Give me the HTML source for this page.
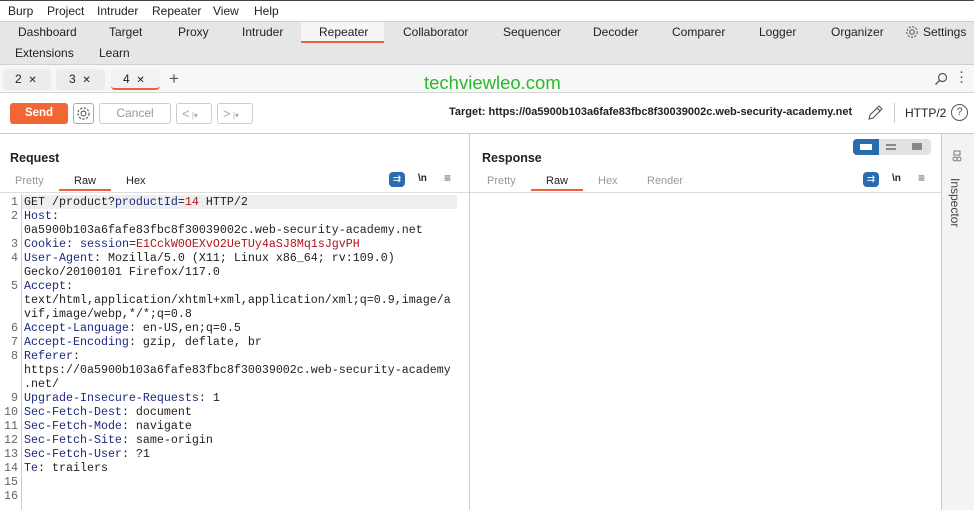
<!DOCTYPE html>
<html><head><style>
*{margin:0;padding:0;box-sizing:border-box}
body{width:974px;height:510px;overflow:hidden;background:#fff;font-family:"Liberation Sans",sans-serif;font-size:12px;color:#222;position:relative}
.a{position:absolute;white-space:nowrap}
.mono{font-family:"Liberation Mono","DejaVu Sans Mono",monospace;font-size:11.67px}
.k{color:#1c2a80}.v{color:#b0151a}
.ln{color:#666;text-align:right;width:18px;left:0}
</style></head><body>
<div class="a" style="left:0;top:0;width:974px;height:1px;background:#444"></div>
<div class="a" style="left:8px;top:4px">Burp</div>
<div class="a" style="left:47px;top:4px">Project</div>
<div class="a" style="left:97px;top:4px">Intruder</div>
<div class="a" style="left:152px;top:4px">Repeater</div>
<div class="a" style="left:213px;top:4px">View</div>
<div class="a" style="left:254px;top:4px">Help</div>
<div class="a" style="left:0;top:21px;width:974px;height:44px;background:#e6e6e6;border-top:1px solid #d0d0d0;border-bottom:1px solid #cfcfcf"></div>
<div class="a" style="left:301px;top:22px;width:83px;height:21px;background:#f5f5f5;border-bottom:2px solid #e8623a"></div>
<div class="a" style="left:18px;top:25px">Dashboard</div>
<div class="a" style="left:109px;top:25px">Target</div>
<div class="a" style="left:178px;top:25px">Proxy</div>
<div class="a" style="left:242px;top:25px">Intruder</div>
<div class="a" style="left:319px;top:25px">Repeater</div>
<div class="a" style="left:403px;top:25px">Collaborator</div>
<div class="a" style="left:503px;top:25px">Sequencer</div>
<div class="a" style="left:593px;top:25px">Decoder</div>
<div class="a" style="left:672px;top:25px">Comparer</div>
<div class="a" style="left:759px;top:25px">Logger</div>
<div class="a" style="left:831px;top:25px">Organizer</div>
<svg class="a" style="left:905px;top:25px" width="14" height="14" viewBox="0 0 14 14"><circle cx="7" cy="7" r="2.3" fill="none" stroke="#555"/><circle cx="7" cy="7" r="5.2" fill="none" stroke="#555" stroke-dasharray="2.2 1.3"/></svg>
<div class="a" style="left:923px;top:25px">Settings</div>
<div class="a" style="left:15px;top:46px">Extensions</div>
<div class="a" style="left:99px;top:46px">Learn</div>
<div class="a" style="left:0;top:65px;width:974px;height:28px;background:#f7f7f7;border-bottom:1px solid #d6d6d6"></div>
<div class="a" style="left:3px;top:69px;width:48px;height:21px;background:#ececec;border-radius:4px"></div>
<div class="a" style="left:56px;top:69px;width:49px;height:21px;background:#ececec;border-radius:4px"></div>
<div class="a" style="left:111px;top:69px;width:49px;height:21px;background:#f2f2f2;border-radius:4px;border-bottom:2px solid #e8623a"></div>
<div class="a" style="left:15px;top:72px">2 &nbsp;<span style="font-size:10px">✕</span></div>
<div class="a" style="left:69px;top:72px">3 &nbsp;<span style="font-size:10px">✕</span></div>
<div class="a" style="left:123px;top:72px">4 &nbsp;<span style="font-size:10px">✕</span></div>
<div class="a" style="left:169px;top:69px;font-size:17px;color:#555">+</div>
<div class="a" style="left:424px;top:72px;font-size:18.5px;color:#2eb82e">techviewleo.com</div>
<svg class="a" style="left:934px;top:72px" width="14" height="14"><circle cx="8.5" cy="5.5" r="4" fill="none" stroke="#555" stroke-width="1.2"/><line x1="5.5" y1="8.5" x2="1.5" y2="12.5" stroke="#555" stroke-width="1.3"/></svg>
<div class="a" style="left:960px;top:71px;color:#555;font-weight:bold;line-height:5px;font-size:11px">·<br>·<br>·</div>
<div class="a" style="left:10px;top:103px;width:58px;height:21px;background:#f26634;border-radius:3px;color:#fff;text-align:center;line-height:21px;font-weight:bold;font-size:11.5px">Send</div>
<div class="a" style="left:73px;top:103px;width:21px;height:21px;border:1px solid #aaa;border-radius:3px"></div>
<svg class="a" style="left:76px;top:106px" width="15" height="15" viewBox="0 0 14 14"><circle cx="7" cy="7" r="2.3" fill="none" stroke="#555"/><circle cx="7" cy="7" r="5.2" fill="none" stroke="#555" stroke-dasharray="2.2 1.3"/></svg>
<div class="a" style="left:99px;top:103px;width:72px;height:21px;border:1px solid #ccc;border-radius:3px;color:#999;text-align:center;line-height:19px">Cancel</div>
<div class="a" style="left:176px;top:103px;width:36px;height:21px;border:1px solid #ccc;border-radius:3px;color:#aaa;line-height:19px;padding-left:5px;font-size:13px">&lt;<span style="font-size:8px"> |▾</span></div>
<div class="a" style="left:217px;top:103px;width:36px;height:21px;border:1px solid #ccc;border-radius:3px;color:#aaa;line-height:19px;padding-left:5px;font-size:13px">&gt;<span style="font-size:8px"> |▾</span></div>
<div class="a" style="left:449px;top:106px;font-size:11px;font-weight:bold;letter-spacing:0">Target: https://0a5900b103a6fafe83fbc8f30039002c.web-security-academy.net</div>
<svg class="a" style="left:866px;top:104px" width="18" height="18"><path d="M3 15 L4 11 L13 2 L16 5 L7 14 Z M11 4 L14 7" fill="none" stroke="#555" stroke-width="1.1"/></svg>
<div class="a" style="left:894px;top:103px;width:1px;height:20px;background:#ccc"></div>
<div class="a" style="left:905px;top:106px">HTTP/2</div>
<div class="a" style="left:951px;top:104px;width:17px;height:17px;border:1.3px solid #555;border-radius:50%;text-align:center;line-height:15px;font-size:11px;color:#555">?</div>
<div class="a" style="left:0;top:133px;width:974px;height:1px;background:#ccc"></div>
<div class="a" style="left:469px;top:133px;width:1px;height:377px;background:#ccc"></div>
<div class="a" style="left:941px;top:133px;width:1px;height:377px;background:#ccc"></div>
<div class="a" style="left:942px;top:134px;width:32px;height:376px;background:#f3f3f3"></div>
<svg class="a" style="left:952px;top:150px" width="10" height="12"><rect x="2" y="1" width="6" height="4" fill="none" stroke="#777"/><circle cx="3" cy="9" r="2" fill="none" stroke="#777"/><circle cx="7" cy="9" r="2" fill="none" stroke="#777"/></svg>
<div class="a" style="left:962px;top:178px;transform:rotate(90deg);transform-origin:0 0;font-size:12px;color:#444">Inspector</div>
<div class="a" style="left:853px;top:139px;width:78px;height:16px;background:#e2e2e2;border-radius:4px"></div>
<div class="a" style="left:853px;top:139px;width:26px;height:16px;background:#2a6bb0;border-radius:4px 0 0 4px"></div>
<div class="a" style="left:860px;top:144px;width:12px;height:6px;border:1px solid #fff;border-left-width:5px;border-right-width:5px;background:#fff"></div>
<div class="a" style="left:886px;top:144px;width:10px;height:6px;border-top:2px solid #888;border-bottom:2px solid #888"></div>
<div class="a" style="left:912px;top:143px;width:10px;height:7px;background:#888"></div>
<div class="a" style="left:10px;top:151px;font-weight:bold;font-size:12.5px">Request</div>
<div class="a" style="left:15px;top:175px;color:#999;font-size:11px">Pretty</div>
<div class="a" style="left:74px;top:175px;font-size:11px">Raw</div>
<div class="a" style="left:59px;top:189px;width:52px;height:2px;background:#e8623a"></div>
<div class="a" style="left:126px;top:175px;font-size:11px">Hex</div>
<div class="a" style="left:0;top:192px;width:469px;height:1px;background:#ddd"></div>
<div class="a" style="left:389px;top:172px;width:16px;height:15px;background:#2a6bb0;border-radius:4px;color:#fff;font-size:10px;text-align:center;line-height:15px">⇉</div>
<div class="a" style="left:418px;top:173px;font-size:10px;font-weight:bold">\n</div>
<div class="a" style="left:444px;top:171px;font-size:12px;color:#555">≡</div>
<div class="a" style="left:482px;top:151px;font-weight:bold;font-size:12.5px">Response</div>
<div class="a" style="left:487px;top:175px;color:#999;font-size:11px">Pretty</div>
<div class="a" style="left:546px;top:175px;font-size:11px">Raw</div>
<div class="a" style="left:531px;top:189px;width:52px;height:2px;background:#e8623a"></div>
<div class="a" style="left:598px;top:175px;color:#999;font-size:11px">Hex</div>
<div class="a" style="left:647px;top:175px;color:#999;font-size:11px">Render</div>
<div class="a" style="left:470px;top:192px;width:471px;height:1px;background:#ddd"></div>
<div class="a" style="left:863px;top:172px;width:16px;height:15px;background:#2a6bb0;border-radius:4px;color:#fff;font-size:10px;text-align:center;line-height:15px">⇉</div>
<div class="a" style="left:892px;top:173px;font-size:10px;font-weight:bold">\n</div>
<div class="a" style="left:918px;top:171px;font-size:12px;color:#555">≡</div>
<div class="a" style="left:21px;top:194px;width:1px;height:316px;background:#ccc"></div>
<div class="a" style="left:22px;top:195px;width:435px;height:14px;background:#eeeeee"></div>
<div class="a mono ln" style="top:195px;line-height:14px">1<br>2<br><br>3<br>4<br><br>5<br><br><br>6<br>7<br>8<br><br><br>9<br>10<br>11<br>12<br>13<br>14<br>15<br>16</div>
<div class="a mono" style="left:24px;top:195px;line-height:14px">GET /product?<span class="k">productId</span>=<span class="v">14</span> HTTP/2<br><span class="k">Host</span>:<br>0a5900b103a6fafe83fbc8f30039002c.web-security-academy.net<br><span class="k">Cookie</span>: <span class="k">session</span>=<span class="v">E1CckW0OEXvO2UeTUy4aSJ8Mq1sJgvPH</span><br><span class="k">User-Agent</span>: Mozilla/5.0 (X11; Linux x86_64; rv:109.0)<br>Gecko/20100101 Firefox/117.0<br><span class="k">Accept</span>:<br>text/html,application/xhtml+xml,application/xml;q=0.9,image/a<br>vif,image/webp,*/*;q=0.8<br><span class="k">Accept-Language</span>: en-US,en;q=0.5<br><span class="k">Accept-Encoding</span>: gzip, deflate, br<br><span class="k">Referer</span>:<br>https://0a5900b103a6fafe83fbc8f30039002c.web-security-academy<br>.net/<br><span class="k">Upgrade-Insecure-Requests</span>: 1<br><span class="k">Sec-Fetch-Dest</span>: document<br><span class="k">Sec-Fetch-Mode</span>: navigate<br><span class="k">Sec-Fetch-Site</span>: same-origin<br><span class="k">Sec-Fetch-User</span>: ?1<br><span class="k">Te</span>: trailers</div>
</body></html>
